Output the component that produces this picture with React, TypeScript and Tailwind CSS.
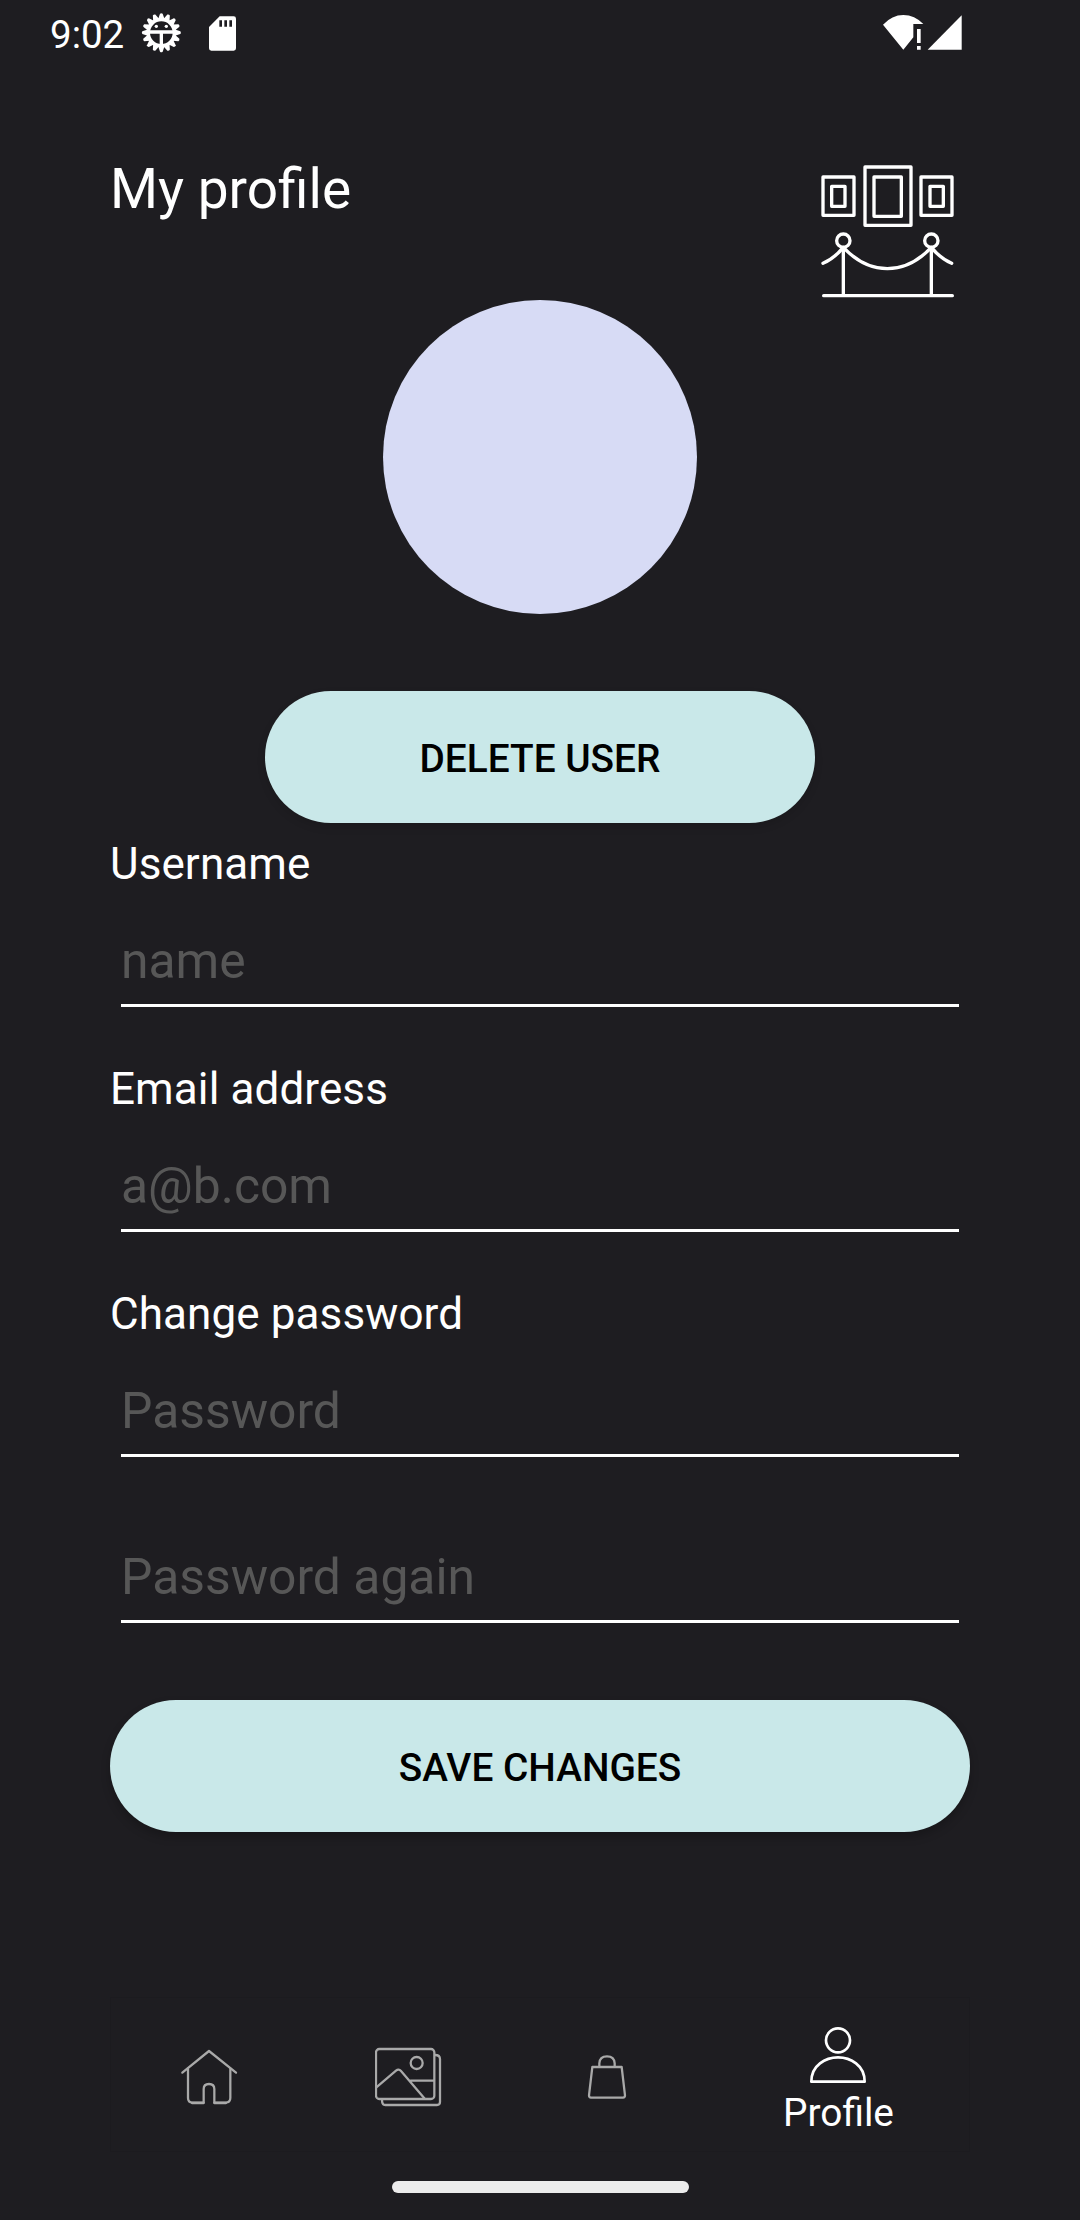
import React from "react";

function GearIcon() {
  const teeth = Array.from({ length: 16 }, (_, i) => i * 22.5);
  return (
    <svg className="ml-[17px] h-[40px] w-[40px]" viewBox="-1 1 120 120" fill="none">
      {teeth.map((a) => (
        <path key={a} d="M50.5 19 L56 3 Q60 0 64 3 L69.5 19Z" fill="#fff" transform={`rotate(${a} 60 60)`} />
      ))}
      <circle cx="60" cy="60" r="39" stroke="#fff" strokeWidth="10" />
      <path d="M20 58H100M60 58V98" stroke="#fff" strokeWidth="10" />
      <circle cx="45" cy="41" r="5" fill="#fff" />
      <circle cx="75" cy="41" r="5" fill="#fff" />
    </svg>
  );
}

function SdCardIcon() {
  return (
    <svg className="ml-[28px] h-[35px] w-[27px]" viewBox="0 0 81 105">
      <path
        fillRule="evenodd"
        fill="#fff"
        d="M32 1H74Q81 1 81 8V97Q81 104 74 104H7Q0 104 0 97V33ZM31 13V32H39V13ZM46 13V32H54V13ZM61 13V32H69V13Z"
      />
    </svg>
  );
}

function StatusBar() {
  return (
    <header className="flex h-[66px] items-start justify-between pl-[50px] pr-[117px]">
      <div className="flex items-start">
        <span className="mt-[13px] w-[74px] whitespace-nowrap text-[38.5px] leading-[44px]">9:02</span>
        <div className="mt-[13px] flex">
          <GearIcon />
        </div>
        <div className="mt-[16px] flex">
          <SdCardIcon />
        </div>
      </div>
      <svg className="mt-[14px] h-[37px] w-[81px]" viewBox="66 42 243 111" fill="#fff">
        <path d="M130 149L69 74Q96 45 130 45Q164 45 190 72H160V112Z" />
        <path d="M171 87H182V129H171ZM171 138H182V149H171Z" />
        <path d="M203 149L305 46V149Z" />
      </svg>
    </header>
  );
}

function GalleryLogo() {
  return (
    <svg
      className="h-[150px] w-[170px]"
      viewBox="0 0 510 450"
      fill="none"
      stroke="#fff"
      strokeWidth="10"
      strokeLinejoin="round"
      strokeLinecap="round"
    >
      <path d="M69 81H162V196H69ZM95 109H135V169H95Z" />
      <path d="M195 51H333V226H195ZM222 81H304V199H222Z" />
      <path d="M363 81H456V196H363ZM390 109H430V169H390Z" />
      <circle cx="130" cy="272" r="20" />
      <circle cx="394" cy="272" r="20" />
      <path d="M130 294V436M394 294V436M71 437H457" />
      <path d="M69 340Q102 326 130 292Q190 356 262 356Q334 356 394 292Q422 326 455 340" />
    </svg>
  );
}

type FieldProps = { label?: string; hint: string };

function Field({ label, hint }: FieldProps) {
  return (
    <div className="flex flex-col">
      {label && <label className="mb-[42px] text-[44px] leading-[52px] tracking-[0.1px]">{label}</label>}
      <div className="mx-[11px] border-b-[3px] border-white pb-[14px] text-[49.8px] leading-[58px] text-[#575757]">
        {hint}
      </div>
    </div>
  );
}

function PillButton({ children, className }: { children: React.ReactNode; className: string }) {
  return (
    <button
      className={`flex h-[132px] items-center justify-center rounded-full bg-[#c9e8e9] pt-[3px] text-[38.8px] font-medium leading-[46px] text-black ${className}`}
    >
      {children}
    </button>
  );
}

function NavIcon({ viewBox, children }: { viewBox: string; children: React.ReactNode }) {
  return (
    <svg
      className="h-[67px] w-[67px]"
      viewBox={viewBox}
      fill="none"
      stroke="currentColor"
      strokeWidth="6.8"
      strokeLinejoin="round"
      strokeLinecap="round"
    >
      {children}
    </svg>
  );
}

function BottomNav() {
  return (
    <nav className="mt-[165px] grid h-[155px] grid-cols-[199px_199px_199px_263px] text-[#a9a9a9] outline-1 -outline-offset-1 outline-[#1c1b1f]">
      <a className="flex justify-center pt-[46px]">
        <NavIcon viewBox="48 189 201 201">
          <path d="M67 278L147 213L228 278" />
          <path d="M84 266V354Q84 367 97 368H131V327Q131 312 147 312Q163 312 163 327V368H197Q211 367 211 354V266" />
          <path d="M96 369H131M163 369H198" />
        </NavIcon>
      </a>
      <a className="flex justify-center pt-[46px]">
        <NavIcon viewBox="645 189 201 201">
          <rect x="648" y="207" width="175" height="150" rx="10" />
          <path d="M825 225Q840 225 840 237V366Q840 375 831 375H676Q666 375 666 359" />
          <circle cx="770" cy="249" r="18" />
          <path d="M649 322L708 272Q716 265 723 273L793 355M752 302H822" />
        </NavIcon>
      </a>
      <a className="flex justify-center pt-[46px]">
        <NavIcon viewBox="42 189 201 201">
          <path d="M97 261H185L195 346Q195 353 189 353H93Q87 353 87 346Z" />
          <path d="M118 259V250Q119 229 141 229Q163 229 164 250V259" />
        </NavIcon>
      </a>
      <a className="flex flex-col items-center pt-[23px] text-white">
        <NavIcon viewBox="735 120 201 201">
          <circle cx="834" cy="181" r="36" strokeWidth="8" />
          <path d="M754 305Q754 270 780 250Q803 232 834 232Q865 232 888 250Q914 270 914 305Z" strokeWidth="8" />
        </NavIcon>
        <span className="mt-[3px] text-[38.8px] leading-[46px]">Profile</span>
      </a>
    </nav>
  );
}

export default function App() {
  return (
    <div className="flex h-[2220px] w-[1080px] flex-col overflow-hidden bg-[#1e1d21] font-['Roboto',sans-serif] text-white">
      <StatusBar />
      <main className="flex flex-col px-[110px] pt-[84px]">
        <div className="flex h-[150px] justify-between">
          <h1 className="mt-[7px] text-[55px] leading-[64px]">My profile</h1>
          <GalleryLogo />
        </div>
        <div className="flex h-[314px] w-[314px] items-center justify-center self-center overflow-hidden">
          <div className="h-[314px] w-[314px] shrink-0 rounded-full bg-[#d7dbf5]" />
        </div>
        <PillButton className="mt-[77px] w-[550px] self-center shadow-[0_4px_8px_rgba(0,0,0,0.12)]">
          DELETE USER
        </PillButton>
        <form className="mt-[15px] flex flex-col">
          <div className="flex flex-col gap-[56px]">
            <Field label="Username" hint="name" />
            <Field label="Email address" hint="a@b.com" />
            <Field label="Change password" hint="Password" />
          </div>
          <div className="mt-[91px]">
            <Field hint="Password again" />
          </div>
          <PillButton className="mt-[77px] w-full shadow-[0_5px_10px_rgba(0,0,0,0.22)]">SAVE CHANGES</PillButton>
        </form>
        <BottomNav />
      </main>
      <div className="mt-[29px] h-[12px] w-[297px] self-center rounded-full bg-[#ececec]" />
    </div>
  );
}
